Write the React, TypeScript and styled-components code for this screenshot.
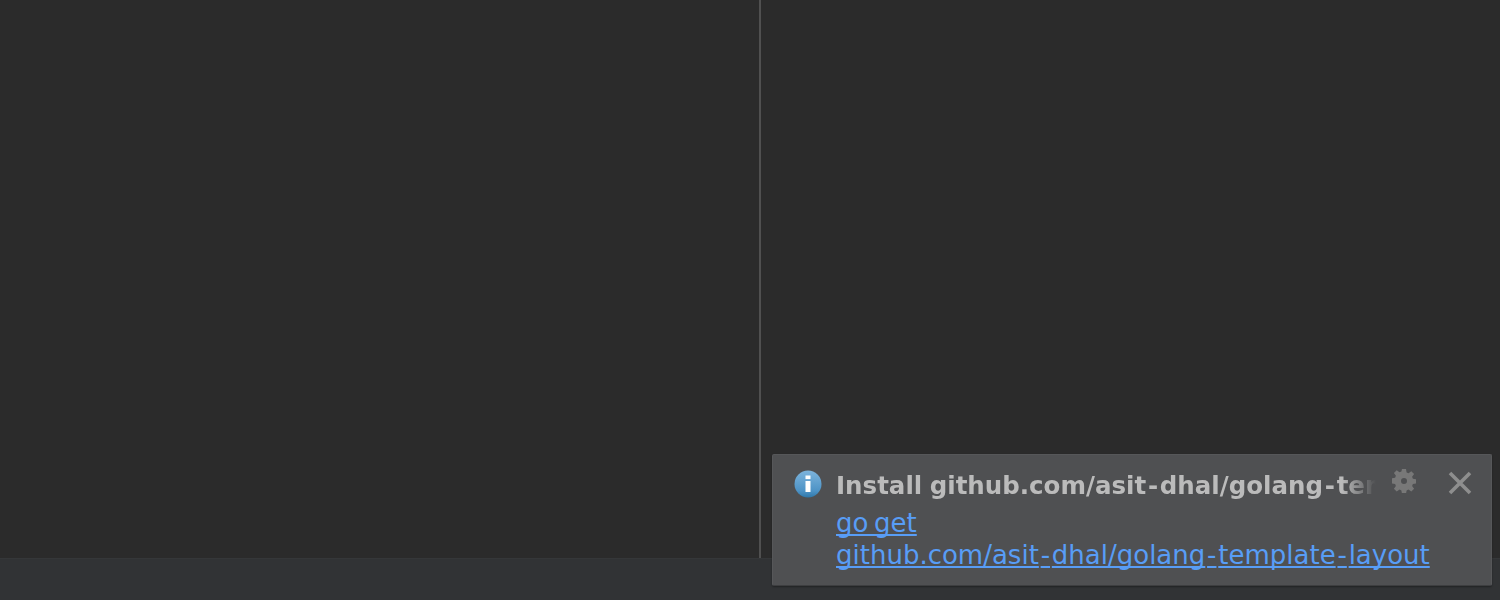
import styled, { createGlobalStyle } from 'styled-components'

const Global = createGlobalStyle`
html, body {
    margin: 0;
    padding: 0;
    background: #2b2b2b;
}
`
const Screen = styled.div`
position: relative;
display: flex;
flex-direction: column;
width: 1500px;
height: 600px;
overflow: hidden;
font-family: "DejaVu Sans", sans-serif;
`
const Editor = styled.main`
flex: 1;
display: flex;
background: #2b2b2b;
`
const Pane = styled.div`
width: 759px;
border-right: 2px solid #505050;
`
const StatusBar = styled.footer`
height: 41px;
background: #313335;
border-top: 1px solid #353739;
`
const Balloon = styled.aside`
position: absolute;
left: 772px;
top: 454px;
width: 720px;
height: 132px;
box-sizing: border-box;
padding: 15px 0 0 21px;
display: grid;
grid-template-columns: 42px 1fr;
align-content: start;
background: #4f5052;
border: 1px solid #565759;
border-bottom-color: #3d3e40;
border-radius: 2px;
box-shadow: 0 1px 2px rgba(0, 0, 0, 0.35);
`
const Icon = styled.svg<{ $top?: number }>`
display: block;
margin-top: ${p => p.$top ?? 0}px;
`
const InfoIcon = () => (
    <Icon width="28" height="28" viewBox="0 0 28 28">
        <defs>
            <linearGradient id="info" x1="0" y1="0" x2="0" y2="1">
                <stop offset="0" stopColor="#7db4dc" />
                <stop offset="0.75" stopColor="#4d93c6" />
                <stop offset="1" stopColor="#2f78aa" />
            </linearGradient>
        </defs>
        <circle cx="14" cy="14" r="13.5" fill="url(#info)" />
        <rect x="11.5" y="5.5" width="5" height="3.6" fill="#fff" />
        <rect x="11.5" y="11" width="5" height="11" fill="#fff" />
    </Icon>
)
const Title = styled.div`
width: 540px;
height: 32px;
overflow: hidden;
white-space: nowrap;
word-spacing: -1px;
font-size: 24.5px;
line-height: 32px;
font-weight: bold;
color: #bbbbbb;
-webkit-mask-image: linear-gradient(to right, #000 506px, transparent 540px);
mask-image: linear-gradient(to right, #000 506px, transparent 540px);
`
const Body = styled.a`
grid-column: 2;
margin-top: 5px;
white-space: nowrap;
word-spacing: -2.6px;
font-size: 26px;
line-height: 32px;
color: #589df6;
text-decoration: underline;
text-decoration-thickness: 2px;
text-decoration-skip-ink: none;
text-underline-offset: 2px;
`
const Dash = styled.span<{ $extra: number }>`
padding: 0 ${p => p.$extra / 2}px;
`
const Actions = styled.div`
position: absolute;
top: 15px;
right: 19px;
display: flex;
align-items: flex-start;
gap: 32px;
`
const GearIcon = () => (
    <Icon $top={-1} width="24" height="24" viewBox="0 0 24 24">
        <path
            fill="#787878"
            fillRule="evenodd"
            d="M10 0h4l.6 3.4 1.9.8 2.8-2 2.8 2.8-2 2.8.8 1.9 3.1.6v4.2l-3.1.6-.8 1.9 2 2.8-2.8 2.8-2.8-2-1.9.8-.6 3.5h-4l-.6-3.5-1.9-.8-2.8 2-2.8-2.8 2-2.8-.8-1.9-3.1-.6V9.3l3.1-.6.8-1.9-2-2.8 2.8-2.8 2.8 2 1.9-.8L10 0zm2 9a3 3 0 100 6 3 3 0 000-6z"
        />
    </Icon>
)
const CloseIcon = () => (
    <Icon $top={1} width="24" height="24" viewBox="0 0 24 24">
        <path d="M2 2l20 20M22 2L2 22" stroke="#8e8e8e" strokeWidth="3.6" />
    </Icon>
)

// the reference font has much wider hyphens than DejaVu
const withDashes = (text: string, extra: number) =>
    text.split('-').map((part, i) => (
        <span key={i}>
            {i > 0 && <Dash $extra={extra}>-</Dash>}
            {part}
        </span>
    ))

const App = () => {
    return (
        <Screen>
            <Global />
            <Editor>
                <Pane />
            </Editor>
            <StatusBar />
            <Balloon>
                <InfoIcon />
                <Title>{withDashes('Install github.com/asit-dhal/golang-template-layout', 3.5)}</Title>
                <Body>
                    go get
                    <br />
                    {withDashes('github.com/asit-dhal/golang-template-layout', 3.6)}
                </Body>
                <Actions>
                    <GearIcon />
                    <CloseIcon />
                </Actions>
            </Balloon>
        </Screen>
    )
}

export default App
